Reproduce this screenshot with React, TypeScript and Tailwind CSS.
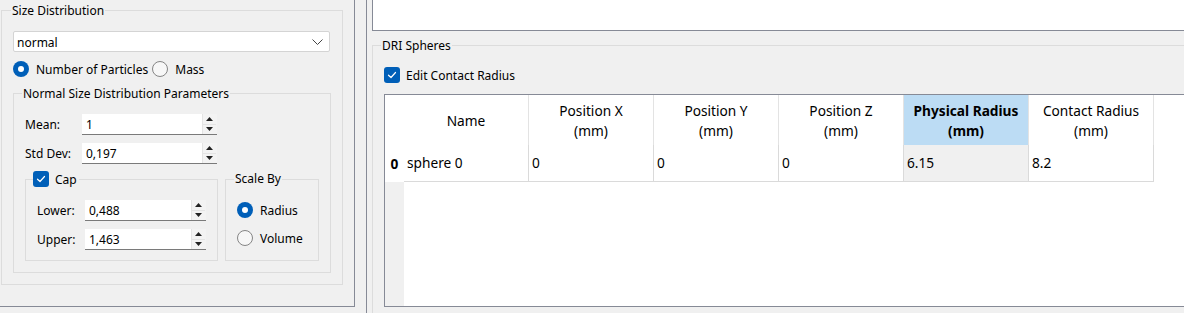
import React from 'react';

const font = { fontFamily: '"Noto Sans", "Liberation Sans", sans-serif' };

function Radio({ checked, label }: { checked?: boolean; label: string }) {
  return (
    <div className="flex items-center h-[16px]">
      {checked ? (
        <span className="w-[16px] h-[16px] rounded-full bg-[#005fb8] flex items-center justify-center shrink-0">
          <span className="w-[6px] h-[6px] rounded-full bg-white" />
        </span>
      ) : (
        <span className="w-[16px] h-[16px] rounded-full border border-[#858585] bg-[#f7f7f7] shrink-0" />
      )}
      <span className="ml-[7px] leading-[16px] pt-[1px]">{label}</span>
    </div>
  );
}

function Check({ label }: { label: string }) {
  return (
    <span className="flex items-center h-[16px]">
      <span className="w-[16px] h-[16px] rounded-[3px] bg-[#005fb8] flex items-center justify-center shrink-0">
        <svg width="10" height="8" viewBox="0 0 10 8" fill="none">
          <path d="M1.5 4.2 L4 6.5 L8.5 1.5" stroke="white" strokeWidth="1.2" strokeLinecap="round" strokeLinejoin="round" />
        </svg>
      </span>
      <span className="ml-[6px] leading-[16px] pt-[1px]">{label}</span>
    </span>
  );
}

function SpinBox({ value, width }: { value: string; width: string }) {
  return (
    <div className={`flex h-[21px] bg-white border-b border-[#7a7a7a] ${width}`}>
      <div className="flex-1 pl-[4px] leading-[20px] pt-[1px]">{value}</div>
      <div className="w-[15px] flex flex-col bg-[#f3f3f3] border-l border-[#e4e4e4] py-[1px] pr-[1px]">
        <div className="flex-1 flex items-center justify-center border-b border-[#e4e4e4]">
          <svg width="7" height="4" viewBox="0 0 7 4">
            <path d="M0 4 L3.5 0 L7 4 Z" fill="#222" />
          </svg>
        </div>
        <div className="flex-1 flex items-center justify-center">
          <svg width="7" height="4" viewBox="0 0 7 4">
            <path d="M0 0 L3.5 4 L7 0 Z" fill="#222" />
          </svg>
        </div>
      </div>
    </div>
  );
}

const columns = [
  { top: 'Name', bottom: '', value: 'sphere 0' },
  { top: 'Position X', bottom: '(mm)', value: '0' },
  { top: 'Position Y', bottom: '(mm)', value: '0' },
  { top: 'Position Z', bottom: '(mm)', value: '0' },
  { top: 'Physical Radius', bottom: '(mm)', value: '6.15', selected: true },
  { top: 'Contact Radius', bottom: '(mm)', value: '8.2' },
];

export default function App() {
  return (
    <div className="w-[1184px] h-[313px] bg-[#f0f0f0] flex overflow-hidden text-[12px] text-black" style={font}>
      {/* Left pane */}
      <div className="w-[355px] h-[307px] shrink-0 border-r border-b border-[#868a96] pt-[2px] pl-[1px]">
        <fieldset className="w-[342px] h-[283px] border border-[#dcdcdc] px-[11px]">
          <legend className="ml-[-2px] px-[1px] leading-[16px] pt-[1px]">Size Distribution</legend>

          <div className="mt-[12px] h-[21px] w-[317px] bg-white border border-[#d4d4d4] rounded-[2px] flex items-center justify-between pl-[3px] pr-[6px]">
            <span className="leading-[19px] pt-[1px]">normal</span>
            <svg width="11" height="6" viewBox="0 0 11 6" fill="none">
              <path d="M0.5 0.5 L5.5 5.5 L10.5 0.5" stroke="#444" strokeWidth="1" />
            </svg>
          </div>

          <div className="mt-[9px] flex items-center">
            <Radio checked label="Number of Particles" />
            <div className="ml-[4px]">
              <Radio label="Mass" />
            </div>
          </div>

          <fieldset className="mt-[8px] w-[317px] h-[188px] border border-[#dcdcdc] px-[11px]">
            <legend className="ml-[-3px] px-[1px] leading-[16px] pt-[1px]">Normal Size Distribution Parameters</legend>

            <div className="mt-[12px] flex items-center">
              <span className="w-[57px] pt-[1px]">Mean:</span>
              <SpinBox value="1" width="w-[135px]" />
            </div>
            <div className="mt-[8px] flex items-center">
              <span className="w-[57px] pt-[1px]">Std Dev:</span>
              <SpinBox value="0,197" width="w-[135px]" />
            </div>

            <div className="mt-[7px] flex gap-[7px]">
              <fieldset className="w-[193px] h-[90px] border border-[#dcdcdc] px-[11px]">
                <legend className="ml-[-4px] pr-[2px]">
                  <Check label="Cap" />
                </legend>
                <div className="mt-[13px] flex items-center">
                  <span className="w-[48px] pt-[1px]">Lower:</span>
                  <SpinBox value="0,488" width="w-[121px]" />
                </div>
                <div className="mt-[8px] flex items-center">
                  <span className="w-[48px] pt-[1px]">Upper:</span>
                  <SpinBox value="1,463" width="w-[121px]" />
                </div>
              </fieldset>

              <fieldset className="w-[94px] h-[90px] border border-[#dcdcdc] px-[11px]">
                <legend className="ml-[-3px] px-[1px] leading-[16px]">Scale By</legend>
                <div className="mt-[15px]">
                  <Radio checked label="Radius" />
                </div>
                <div className="mt-[12px]">
                  <Radio label="Volume" />
                </div>
              </fieldset>
            </div>
          </fieldset>
        </fieldset>
      </div>

      {/* Right pane */}
      <div className="ml-[11px] h-[313px] flex-1 border-l border-[#868a96] pl-[5px] flex flex-col min-w-0">
        <div className="h-[31px] bg-white border-l border-b border-[#868a96] shrink-0" />

        <fieldset className="mt-[6px] w-[900px] h-[300px] border border-[#dcdcdc] px-[11px] shrink-0">
          <legend className="ml-[-3px] px-[1px] leading-[16px] pt-[1px]">DRI Spheres</legend>

          <div className="mt-[13px]">
            <Check label="Edit Contact Radius" />
          </div>

          <div className="mt-[11px] w-[900px] h-[213px] border-l border-t border-b border-[#868a96] bg-white flex text-[13.7px]">
            {/* vertical header */}
            <div className="w-[19px] flex flex-col shrink-0">
              <div className="h-[50px] bg-white" />
              <div className="h-[37px] bg-white flex items-center justify-center font-bold pt-[1px]">0</div>
              <div className="flex-1 bg-[#f0f0f0]" />
            </div>

            {columns.map((c) => (
              <div key={c.top} className="w-[125px] shrink-0 flex flex-col">
                <div
                  className={`h-[50px] border-r border-[#e3e3e3] flex flex-col items-center justify-center leading-[20px] pt-[2px] ${
                    c.selected ? 'bg-[#bcdcf4] font-bold' : 'bg-white'
                  }`}
                >
                  <span>{c.top}</span>
                  {c.bottom && <span>{c.bottom}</span>}
                </div>
                <div
                  className={`h-[37px] border-r border-b border-[#dadada] flex items-center pl-[3px] pt-[1px] ${
                    c.selected ? 'bg-[#f0f0f0]' : 'bg-white'
                  }`}
                >
                  {c.value}
                </div>
              </div>
            ))}
          </div>
        </fieldset>
      </div>
    </div>
  );
}
